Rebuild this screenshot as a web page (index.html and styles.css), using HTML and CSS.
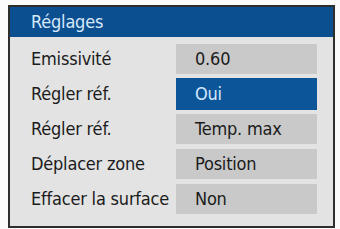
FILE: index.html
```html
<!DOCTYPE html>
<html lang="fr">
<head>
<meta charset="utf-8">
<link rel="stylesheet" href="styles.css">
</head>
<body>
<div class="panel">
  <div class="header">Réglages</div>
  <div class="rows">
    <div class="row"><span class="label">Emissivité</span><span class="value">0.60</span></div>
    <div class="row"><span class="label">Régler réf.</span><span class="value selected">Oui</span></div>
    <div class="row"><span class="label">Régler réf.</span><span class="value">Temp. max</span></div>
    <div class="row"><span class="label">Déplacer zone</span><span class="value">Position</span></div>
    <div class="row"><span class="label">Effacer la surface</span><span class="value">Non</span></div>
  </div>
</div>
</body>
</html>
```
FILE: styles.css
```css
html, body {
  margin: 0;
  padding: 0;
  background: #fbfbfb;
}
body {
  padding: 5px 0 0 8px;
  font-family: "DejaVu Sans Condensed", "Liberation Sans", sans-serif;
  font-stretch: condensed;
  letter-spacing: -0.2px;
}
.panel {
  width: 323px;
  height: 219px;
  border: 2px solid #2e2e2e;
  background: #e3e3e3;
  display: flex;
  flex-direction: column;
}
.header {
  height: 30px;
  background: #0c4f90;
  color: #d6e8fb;
  font-size: 18px;
  line-height: 29px;
  padding-left: 21px;
}
.rows {
  display: flex;
  flex-direction: column;
  padding-top: 4px;
}
.row {
  height: 35px;
  display: flex;
  align-items: center;
  padding-left: 21px;
  font-size: 18px;
  color: #1b1b1b;
}
.label {
  width: 145px;
  white-space: nowrap;
}
.value {
  width: 122px;
  height: 30px;
  line-height: 30px;
  padding-left: 19px;
  background: #c9c9c9;
}
.value.selected {
  background: #0c5598;
  color: #d3e9ff;
  height: 32px;
  line-height: 32px;
}
```
